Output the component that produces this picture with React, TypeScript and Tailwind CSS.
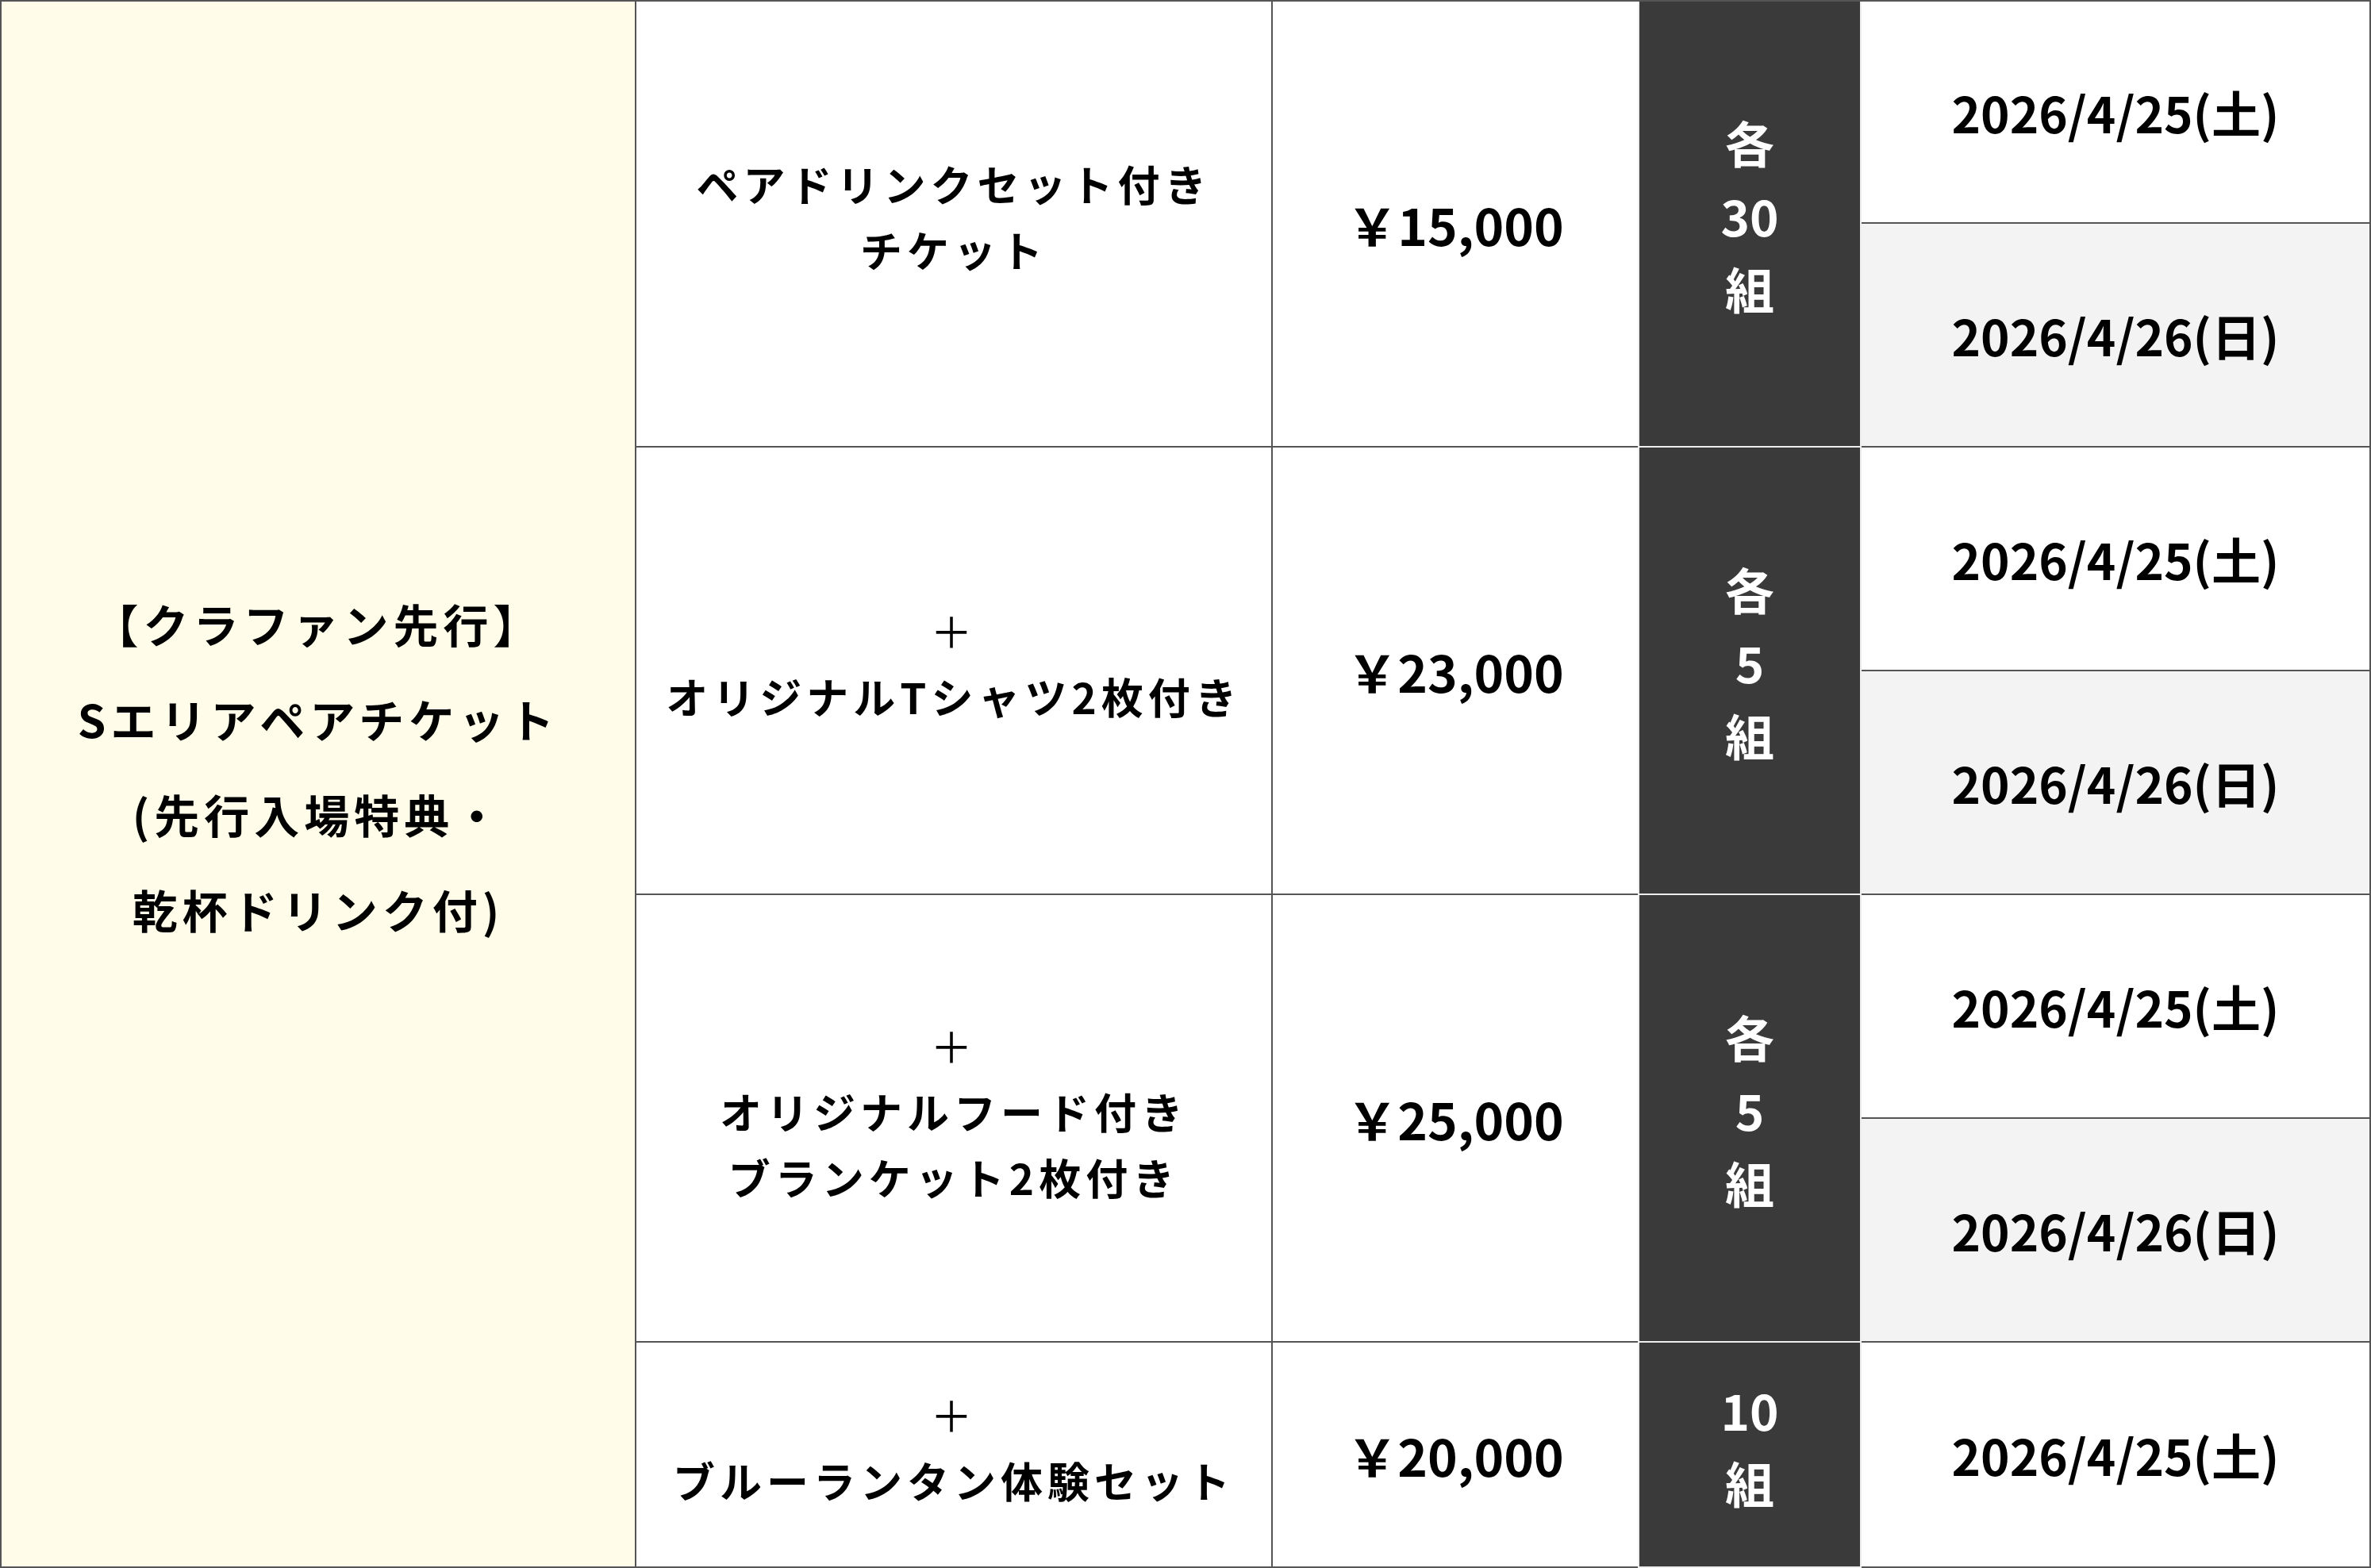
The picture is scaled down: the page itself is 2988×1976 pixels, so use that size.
import React from 'react';

interface Plan {
  lines: string[];
  plus: boolean;
  price: string;
  count: string;
  each: boolean;
  dates: string[];
}

const plans: Plan[] = [
  {
    lines: ['ペアドリンクセット付き', 'チケット'],
    plus: false,
    price: '￥15,000',
    count: '30',
    each: true,
    dates: ['2026/4/25(土)', '2026/4/26(日)'],
  },
  {
    lines: ['オリジナルTシャツ2枚付き'],
    plus: true,
    price: '￥23,000',
    count: '5',
    each: true,
    dates: ['2026/4/25(土)', '2026/4/26(日)'],
  },
  {
    lines: ['オリジナルフード付き', 'ブランケット2枚付き'],
    plus: true,
    price: '￥25,000',
    count: '5',
    each: true,
    dates: ['2026/4/25(土)', '2026/4/26(日)'],
  },
  {
    lines: ['ブルーランタン体験セット'],
    plus: true,
    price: '￥20,000',
    count: '10',
    each: false,
    dates: ['2026/4/25(土)'],
  },
];

const cell = 'flex items-center justify-center text-center border-r-2 border-b-2 border-[#555]';

const App: React.FC = () => {
  return (
    <div className="w-[2988px] h-[1976px] bg-white font-['Noto_Sans_CJK_JP','Noto_Sans',sans-serif] font-bold text-black">
      <div className="grid h-full grid-cols-[800px_802px_460px_282px_642px] grid-rows-[280px_282px_282px_282px_282px_282px_284px] border-t-2 border-l-2 border-[#555]">
        {/* Plan title */}
        <div className={`${cell} row-span-7 bg-[#fffde9] pb-[46px]`}>
          <p className="text-[57px] leading-[120px] tracking-[6px]">
            【クラファン先行】
            <br />
            Sエリアペアチケット
            <br />
            (先行入場特典・
            <br />
            乾杯ドリンク付)
          </p>
        </div>

        {plans.map((plan, i) => {
          const span = plan.dates.length === 2 ? 'row-span-2' : 'row-span-1';
          return (
            <React.Fragment key={i}>
              <div className={`${cell} ${span} px-[20px] pb-[18px]`}>
                <div className="text-[53px] leading-[83px] tracking-[6px]">
                  {plan.plus && <div className="font-normal">＋</div>}
                  {plan.lines.map((line) => (
                    <div key={line}>{line}</div>
                  ))}
                </div>
              </div>

              <div className={`${span} flex items-center justify-center border-b-2 border-[#555]`}>
                <span className="text-[64px]">{plan.price}</span>
              </div>

              <div className={`${span} flex flex-col items-center justify-center pb-[22px] border-x-2 border-b-2 border-[#eeeeee] bg-[#3a3a3a] text-white text-[62px] leading-[92px]`}>
                {plan.each && <span>各</span>}
                <span>{plan.count}</span>
                <span>組</span>
              </div>

              {plan.dates.map((date, j) => (
                <div
                  key={date}
                  className={`${cell} ${j === 1 ? 'bg-[#f3f3f3]' : 'bg-white'}`}
                >
                  <span className="text-[62px]">{date}</span>
                </div>
              ))}
            </React.Fragment>
          );
        })}
      </div>
    </div>
  );
};

export default App;
